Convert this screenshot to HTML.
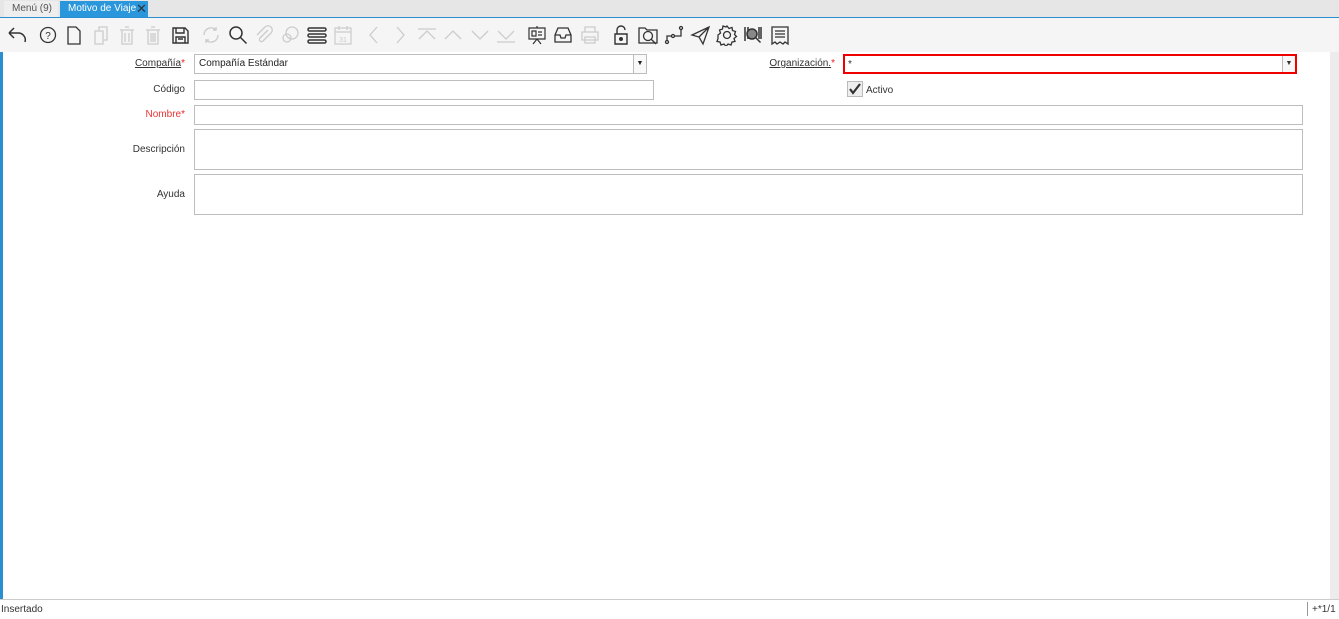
<!DOCTYPE html>
<html><head><meta charset="utf-8"><style>
*{box-sizing:border-box;margin:0;padding:0}
body{width:1339px;height:619px;overflow:hidden;background:#fff;font-family:"Liberation Sans","DejaVu Sans",sans-serif;font-size:10px;color:#333;position:relative}
.tabs{position:absolute;left:0;top:0;width:1339px;height:18px;background:#e6e6e6;border-bottom:1px solid #2a8fd0}
.tab{position:absolute;top:1px;height:16px;line-height:16px;font-size:10px;padding:0 0 0 8px;white-space:nowrap}
.t1{left:4px;width:54px;background:#eee;color:#555}
.t2{left:60px;width:88px;background:#2a96db;color:#fff}
.tb{position:absolute;left:0;top:18px;width:1339px;height:34px;background:#f5f5f5}
.tb svg{position:absolute;top:6px;width:22px;height:22px}
.left{position:absolute;left:0;top:52px;width:3px;height:548px;background:#2a8fd0}
.rs{position:absolute;left:1330px;top:52px;width:9px;height:548px;background:#ececec}
.lbl{position:absolute;text-align:right;font-size:10px;color:#333;width:120px}
.inp{position:absolute;border:1px solid #bdbdbd;background:#fff}
.req{color:#e22}
u{text-decoration:underline}
.status{position:absolute;left:0;top:599px;width:1339px;height:20px;border-top:1px solid #ccc;background:#fff;font-size:10px}
</style></head><body>
<div class="tabs"><div class="tab t1">Menú (9)</div><div class="tab t2">Motivo de Viaje <span style="position:absolute;left:76px;top:0;color:#333;font-size:13px;line-height:16px">✕</span></div></div>
<div class="tb">
<svg style="left:6px" viewBox="0 0 22 22" fill="none" stroke="#333" stroke-width="1.5"><path d="M3 9l5-5M3 9l5 5M3 9h9a7 7 0 0 1 7 9"/></svg>
<svg style="left:37px" viewBox="0 0 22 22" fill="none" stroke="#333" stroke-width="1.3"><circle cx="11" cy="11" r="7.5"/><text x="11" y="15" font-size="10" text-anchor="middle" fill="#333" stroke="none">?</text></svg>
<svg style="left:63px" viewBox="0 0 22 22" fill="none" stroke="#333" stroke-width="1.3"><path d="M5 3h8l4 4v13H5z"/></svg>
<svg style="left:90px" viewBox="0 0 22 22" fill="none" stroke="#ccc" stroke-width="1.3"><path d="M5 7h8v13H5zM9 7V3h8v13h-4"/></svg>
<svg style="left:116px" viewBox="0 0 22 22" fill="none" stroke="#ccc" stroke-width="1.3"><path d="M4 6h14M6 6v14h10V6M9 3h4M9 9v9M13 9v9"/></svg>
<svg style="left:142px" viewBox="0 0 22 22" fill="none" stroke="#ccc" stroke-width="1.3"><path d="M4 6h14M6 6v14h10V6M9 3h4M9 9v9M11 9v9M13 9v9"/></svg>
<svg style="left:169px" viewBox="0 0 22 22" fill="none" stroke="#333" stroke-width="1.4"><path d="M4 4h12l3 3v12H4zM7 4v5h8V4M7 19v-6h9v6M9 15h5"/></svg>
<svg style="left:200px" viewBox="0 0 22 22" fill="none" stroke="#ccc" stroke-width="1.4"><path d="M4 11a7 7 0 0 1 12-5M18 11a7 7 0 0 1-12 5M16 3v3h-3M6 19v-3h3"/></svg>
<svg style="left:227px" viewBox="0 0 22 22" fill="none" stroke="#333" stroke-width="1.5"><circle cx="9" cy="9" r="6"/><path d="M13.5 13.5l6 6"/></svg>
<svg style="left:253px" viewBox="0 0 22 22" fill="none" stroke="#ccc" stroke-width="1.3"><path d="M15 6l-8 8a2 2 0 0 0 3 3l8-8a4 4 0 0 0-6-6l-8 8"/></svg>
<svg style="left:279px" viewBox="0 0 22 22" fill="none" stroke="#ccc" stroke-width="1.3"><circle cx="13" cy="9" r="6"/><circle cx="8" cy="14" r="4"/></svg>
<svg style="left:306px" viewBox="0 0 22 22" fill="none" stroke="#333" stroke-width="1.5"><rect x="2" y="4" width="18" height="3" rx="1.5"/><rect x="2" y="10" width="18" height="3" rx="1.5"/><rect x="2" y="16" width="18" height="3" rx="1.5"/></svg>
<svg style="left:332px" viewBox="0 0 22 22" fill="none" stroke="#ccc" stroke-width="1.2"><rect x="3" y="4" width="16" height="16"/><path d="M3 8h16M7 2v4M15 2v4"/><text x="11" y="18" font-size="7" text-anchor="middle" fill="#ccc" stroke="none">31</text></svg>
<svg style="left:363px" viewBox="0 0 22 22" fill="none" stroke="#ccc" stroke-width="1.3"><path d="M14 3l-7 8 7 8"/></svg>
<svg style="left:389px" viewBox="0 0 22 22" fill="none" stroke="#ccc" stroke-width="1.3"><path d="M8 3l7 8-7 8"/></svg>
<svg style="left:416px" viewBox="0 0 22 22" fill="none" stroke="#ccc" stroke-width="1.3"><path d="M2 5h18M3 15l8-8 8 8"/></svg>
<svg style="left:442px" viewBox="0 0 22 22" fill="none" stroke="#ccc" stroke-width="1.3"><path d="M3 15l8-8 8 8"/></svg>
<svg style="left:469px" viewBox="0 0 22 22" fill="none" stroke="#ccc" stroke-width="1.3"><path d="M3 7l8 8 8-8"/></svg>
<svg style="left:495px" viewBox="0 0 22 22" fill="none" stroke="#ccc" stroke-width="1.3"><path d="M2 18h18M3 7l8 8 8-8"/></svg>
<svg style="left:526px" viewBox="0 0 22 22" fill="none" stroke="#333" stroke-width="1.2"><path d="M3 4h16v11H3zM11 2v2M11 15l-4 5M11 15l4 5M6 7h4v5H6zM12 8h4M12 11h4"/></svg>
<svg style="left:552px" viewBox="0 0 22 22" fill="none" stroke="#333" stroke-width="1.3"><path d="M6 4h10l3 7v7H3v-7zM3 11h5l1 3h4l1-3h5"/></svg>
<svg style="left:579px" viewBox="0 0 22 22" fill="none" stroke="#ccc" stroke-width="1.3"><path d="M6 8V3h10v5M3 8h16v8H3zM6 13h10v6H6z"/></svg>
<svg style="left:610px" viewBox="0 0 22 22" fill="none" stroke="#333" stroke-width="1.4"><path d="M7 10V6a4 4 0 0 1 8 0M5 10h12v10H5z"/><circle cx="11" cy="15" r="1.3" fill="#333"/></svg>
<svg style="left:637px" viewBox="0 0 22 22" fill="none" stroke="#333" stroke-width="1.3"><path d="M2 4h6l2 2h10v13H2z"/><circle cx="11" cy="12" r="4.5"/><path d="M14 15l5 5"/></svg>
<svg style="left:663px" viewBox="0 0 22 22" fill="none" stroke="#333" stroke-width="1.3"><circle cx="4" cy="18" r="1.5"/><circle cx="10" cy="12" r="1.5"/><circle cx="18" cy="4" r="1.5"/><path d="M4 16.5V12h4.5M11.5 12H18V5.5"/></svg>
<svg style="left:689px" viewBox="0 0 22 22" fill="none" stroke="#333" stroke-width="1.3"><path d="M3 11l17-8-6 17-4-7zM10 13l10-10"/></svg>
<svg style="left:716px" viewBox="0 0 22 22" fill="none" stroke="#333" stroke-width="1.3"><circle cx="11" cy="11" r="3.5"/><path d="M11 2l2 2.5 3-1 .5 3 3 1-1 3 2 2-2.5 2 1 3-3 .5-1 3-3-1-2 2.5-2-2.5-3 1-1-3-3-.5 1-3L2 11l2.5-2-1-3 3-1 .5-3 3 1z"/></svg>
<svg style="left:742px" viewBox="0 0 22 22" fill="none" stroke="#333" stroke-width="1.5"><path d="M3 3v14M6 3v12M17 3v12M19 3v12"/><circle cx="10" cy="10" r="5" fill="#888"/><path d="M13.5 13.5l5 5"/></svg>
<svg style="left:769px" viewBox="0 0 22 22" fill="none" stroke="#333" stroke-width="1.3"><path d="M3 3h16v17l-3-2-2 2-3-2-3 2-2-2-3 2zM6 7h10M6 10h10M6 13h10"/></svg>
</div>
<div class="left"></div><div class="rs"></div>

<div class="lbl" style="left:65px;top:58px"><u>Compañía</u><span class="req">*</span></div>
<div class="inp" style="left:194px;top:54px;width:453px;height:20px;padding:3px 4px;font-size:10px;color:#222;line-height:12px">Compañía Estándar<div style="position:absolute;right:-1px;top:-1px;width:14px;height:20px;border:1px solid #bdbdbd;background:#f9f9f9;font-size:7px;text-align:center;line-height:18px">▼</div></div>
<div class="lbl" style="left:65px;top:84px">Código</div>
<div class="inp" style="left:194px;top:80px;width:460px;height:20px"></div>
<div class="lbl" style="left:65px;top:109px;color:#e33">Nombre<span class="req">*</span></div>
<div class="inp" style="left:194px;top:105px;width:1109px;height:20px"></div>
<div class="lbl" style="left:65px;top:144px">Descripción</div>
<div class="inp" style="left:194px;top:129px;width:1109px;height:41px"></div>
<div class="lbl" style="left:65px;top:189px">Ayuda</div>
<div class="inp" style="left:194px;top:174px;width:1109px;height:41px"></div>

<div class="lbl" style="left:715px;top:58px"><u>Organización.</u><span class="req">*</span></div>
<div style="position:absolute;left:843px;top:54px;width:454px;height:20px;border:2px solid #e00;background:#fff;padding:3px 3px;font-size:10px;line-height:12px">*<div style="position:absolute;right:0;top:0;width:13px;height:16px;border-left:1px solid #bbb;background:#f7f7f7;font-size:7px;text-align:center;line-height:16px">▼</div></div>
<div style="position:absolute;left:847px;top:81px;width:16px;height:16px;border:1px solid #bbb;background:#eee"><svg width="14" height="14" viewBox="0 0 14 14" style="position:absolute;left:0;top:0"><path d="M2 7l3 4 7-9" fill="none" stroke="#333" stroke-width="2.2"/></svg></div>
<div style="position:absolute;left:866px;top:85px;font-size:10px">Activo</div>

<div class="status"><span style="position:absolute;left:1px;top:4px">Insertado</span><span style="position:absolute;left:1307px;top:2px;height:14px;border-left:1px solid #999"></span><span style="position:absolute;left:1312px;top:4px">+*1/1</span></div>
</body></html>
